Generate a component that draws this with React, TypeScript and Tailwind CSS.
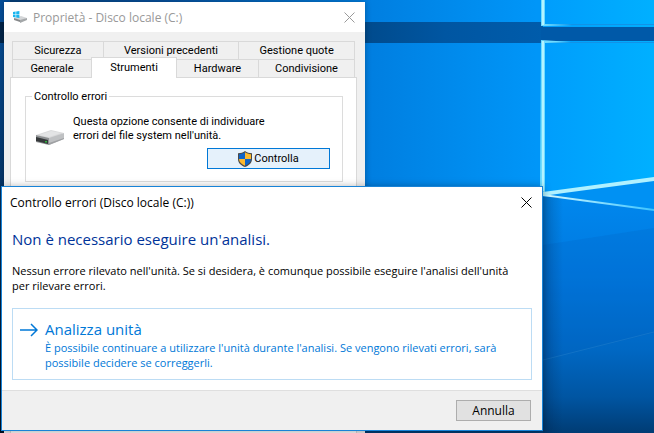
import { ReactNode } from 'react';

const backTabs = ['Sicurezza', 'Versioni precedenti', 'Gestione quote'];

const CloseIcon = () => (
  <svg viewBox="0 0 11 11" className="w-[11px] h-[11px]" fill="none" stroke="currentColor">
    <path d="M.5 .5l10 10M10.5 .5l-10 10" />
  </svg>
);

const DriveIcon = ({ className }: { className: string }) => (
  <svg viewBox="0 0 30 17" className={className}>
    <path d="M1 6L16 1l13 3-14 6z" fill="#d9dadb" />
    <path d="M4 6L16 2l10 2-12 4z" fill="#e3e4e5" />
    <path d="M1 6l13 3v7L1 13z" fill="#8e9193" />
    <path d="M1 8l12 3v4L1 12z" fill="#36393b" />
    <path d="M14 9l15-5v6l-15 6z" fill="#bfc1c3" />
    <path d="M14 14l15-5v1l-15 6z" fill="#9fa1a3" />
    <rect x="10" y="12" width="2" height="1.500" fill="#2fb43c" />
  </svg>
);

const SystemDriveIcon = () => (
  <svg viewBox="0 0 15 12" className="w-[15px] h-3">
    <path d="M1 7l7-2 6 2-7 3z" fill="#d4d6d8" />
    <path d="M1 7l6 2v2L1 9z" fill="#85888a" />
    <path d="M7 9l7-2v2l-7 3z" fill="#a4a7a9" />
    <path d="M0 1l2.6-.4v2.6H0zM3.2.5L6.4 0v3.2H3.2zM0 3.8h2.6v2.6L0 6zM3.2 3.8h3.2V7l-3.2-.5z" fill="#19b5ef" />
  </svg>
);

const ShieldIcon = () => (
  <svg viewBox="0 0 14 16" className="w-[14px] h-4">
    <path d="M7 0c2 1.500 4 2.200 7 2.200V8c0 4-3 6.500-7 8-4-1.500-7-4-7-8V2.200C3 2.200 5 1.500 7 0z" fill="#4a4a48" />
    <path d="M7 1.300V8H1V3.200c2.500-.1 4.300-.7 6-1.900z" fill="#0f64c8" />
    <path d="M7 1.300V8h6V3.200c-2.500-.1-4.300-.7-6-1.900z" fill="#fdb92e" />
    <path d="M1 8h6v6.800C3.500 13.400 1.100 11.300 1 8z" fill="#fdb92e" />
    <path d="M13 8H7v6.800c3.500-1.400 5.900-3.500 6-6.800z" fill="#0f64c8" />
  </svg>
);

const ArrowIcon = () => (
  <svg viewBox="0 0 18 14" className="w-[18px] h-[14px] shrink-0" fill="none" stroke="#0078d7" strokeWidth="1.500">
    <path d="M0 7h17M11 1l6 6-6 6" />
  </svg>
);

const Wallpaper = () => (
  <svg viewBox="0 0 654 433" preserveAspectRatio="none" className="absolute inset-0 w-full h-full">
    <defs>
      <linearGradient id="sky" x1="0" x2="1">
        <stop offset="0" stopColor="#063f78" />
        <stop offset=".25" stopColor="#06509c" />
        <stop offset=".56" stopColor="#007ee0" />
        <stop offset=".82" stopColor="#0096f8" />
      </linearGradient>
      <linearGradient id="pane" x1="0" x2="1">
        <stop offset="0" stopColor="#009dfc" />
        <stop offset="1" stopColor="#00b0ff" />
      </linearGradient>
      <linearGradient id="band" x1="0" x2="1">
        <stop offset="0" stopColor="#022448" />
        <stop offset=".56" stopColor="#00427c" />
        <stop offset=".82" stopColor="#0056a2" />
        <stop offset="1" stopColor="#005cab" />
      </linearGradient>
      <linearGradient id="floor" x1="0" x2="0" y1="0" y2="1">
        <stop offset="0" stopColor="#0088ee" />
        <stop offset=".35" stopColor="#0078df" />
        <stop offset=".65" stopColor="#0068c4" />
        <stop offset=".85" stopColor="#0055a2" />
        <stop offset="1" stopColor="#003c74" />
      </linearGradient>
      <linearGradient id="left" x1="0" x2="0" y1="0" y2="1">
        <stop offset="0" stopColor="#06509c" />
        <stop offset="1" stopColor="#021226" />
      </linearGradient>
      <linearGradient id="glow" x1="0" x2="1">
        <stop offset="0" stopColor="#d8fbff" />
        <stop offset="1" stopColor="#3cc4ff" />
      </linearGradient>
      <linearGradient id="edge" x1="0" x2="1">
        <stop offset="0" stopColor="#001d40" stopOpacity=".25" />
        <stop offset="1" stopColor="#001d40" stopOpacity="0" />
      </linearGradient>
    </defs>
    <rect width="654" height="433" fill="url(#sky)" />
    <rect width="10" height="433" fill="url(#left)" />
    <rect x="543" width="111" height="200" fill="url(#pane)" />
    <path d="M0 22h543v21H0z" fill="url(#band)" />
    <path d="M541 27h113v14H541z" fill="#0059a8" />
    <path d="M543 193l111-13v30z" fill="#0091f3" />
    <path d="M365 193h178l111 17v223H365z" fill="url(#floor)" />
    <path d="M543 245l111-17v105l-111 27z" fill="#0060c0" opacity=".2" />
    <path d="M543 360l111-28" stroke="#2a86cf" strokeWidth=".7" opacity=".6" />
    <path d="M544 24h110v1H544zM544 42h110v1H544z" fill="#1292e6" />
    <path d="M541 0h4v24l27 1-27 1h-4zM541 40l30 2-26 1v150h-5z" fill="#6fdcff" />
    <path d="M542 0h2v25h-2zM542 41h2v150h-2z" fill="#b4f3ff" />
    <path d="M543 194l111 15v2l-111-15z" fill="url(#glow)" />
    <path d="M543 192l111-15v4l-90 12-21 3z" fill="#b0f1ff" />
    <rect x="543" y="197" width="20" height="236" fill="url(#edge)" />
  </svg>
);

const Tab = ({ children, className = '' }: { children: ReactNode; className?: string }) => (
  <button role="tab" className={`h-[18px] flex items-center justify-center border-t border-[#d9d9d9] ${className}`}>
    {children}
  </button>
);

const PropertiesWindow = () => (
  <section className="absolute left-1 right-[289px] top-0.5 bottom-0 flex flex-col bg-[#f0f0f0] text-[11px] leading-[13px] font-['Roboto',sans-serif] shadow-[0_0_6px_rgba(0,0,0,0.3)]">
    <header className="h-[30px] shrink-0 bg-white pl-[9px] pr-2.5 flex items-center gap-[5px] text-[12px] text-[#999] font-['Open_Sans',sans-serif]">
      <SystemDriveIcon />
      <h1 className="grow">Proprietà - Disco locale (C:)</h1>
      <button aria-label="Chiudi"><CloseIcon /></button>
    </header>
    <div className="grow flex flex-col pt-[9px] pl-1.5 pr-2">
      <div role="tablist" className="mx-0.5">
        <div className="grid grid-cols-[91fr_136fr_116fr] border-l border-[#d9d9d9]">
          {backTabs.map((tab) => <Tab key={tab} className="border-r">{tab}</Tab>)}
        </div>
        <div className="grid grid-cols-[79fr_86fr_82fr_96fr] items-end">
          <Tab className="border-l">Generale</Tab>
          <button role="tab" aria-selected="true" className="relative z-10 h-[21px] -mt-0.5 -mb-px flex justify-center pt-[3px] bg-white border border-b-0 border-[#d9d9d9]">
            Strumenti
          </button>
          <Tab className="border-r">Hardware</Tab>
          <Tab className="border-r">Condivisione</Tab>
        </div>
      </div>
      <div role="tabpanel" className="grow bg-white border border-b-0 border-[#d9d9d9] pl-3.5 pr-[13px] pt-3">
        <fieldset className="border border-[#dcdcdc] px-2 pb-3">
          <legend className="-ml-0.5 px-0.5">Controllo errori</legend>
          <div className="flex items-start gap-2 pt-3 pl-px">
            <DriveIcon className="w-[30px] h-[17px] mt-3.5" />
            <p className="leading-[14px]">Questa opzione consente di individuare<br />errori del file system nell'unità.</p>
          </div>
          <button className="mt-0.5 ml-auto mr-1 w-[123px] h-[21px] flex items-center justify-center gap-0.5 bg-[#e5f1fb] border border-[#0078d7]">
            <ShieldIcon />
            Controlla
          </button>
        </fieldset>
      </div>
    </div>
  </section>
);

const ErrorCheckDialog = () => (
  <section role="dialog" aria-labelledby="dialog-title" className="absolute left-px right-[111px] top-[186px] bg-white border border-[#1883d7] text-[11px] leading-[15px] text-black font-['Open_Sans',sans-serif] shadow-[0_1px_8px_rgba(0,0,0,0.35)]">
    <header className="h-[30px] pl-2 pr-2.5 flex items-center justify-between">
      <h1 id="dialog-title" className="text-[12px]">Controllo errori (Disco locale (C:))</h1>
      <button aria-label="Chiudi"><CloseIcon /></button>
    </header>
    <div className="px-2.5 pt-3 pb-2.5">
      <h2 className="text-[15px] leading-5 text-[#003399]">Non è necessario eseguire un'analisi.</h2>
      <p className="pt-3.5">
        Nessun errore rilevato nell'unità. Se si desidera, è comunque possibile eseguire l'analisi dell'unità<br />
        per rilevare errori.
      </p>
      <button className="mt-[15px] w-full h-[72px] px-[7px] pt-2.5 flex items-start gap-[7px] text-left border border-[#bcdcf4] text-[#0078d7]">
        <span className="pt-1"><ArrowIcon /></span>
        <span>
          <span className="block text-[15px] leading-[21px]">Analizza unità</span>
          È possibile continuare a utilizzare l'unità durante l'analisi. Se vengono rilevati errori, sarà<br />
          possibile decidere se correggerli.
        </span>
      </button>
    </div>
    <footer className="flex justify-end bg-[#f0f0f0] border-t border-[#dfdfdf] py-[9px] pr-[11px]">
      <button className="w-[75px] h-[21px] flex items-center justify-center bg-[#e1e1e1] border border-[#adadad] text-[12px]">Annulla</button>
    </footer>
  </section>
);

const App = () => {
  return (
    <main className="relative min-h-screen overflow-hidden bg-[#003569]">
      <Wallpaper />
      <PropertiesWindow />
      <ErrorCheckDialog />
    </main>
  );
};

export default App;
